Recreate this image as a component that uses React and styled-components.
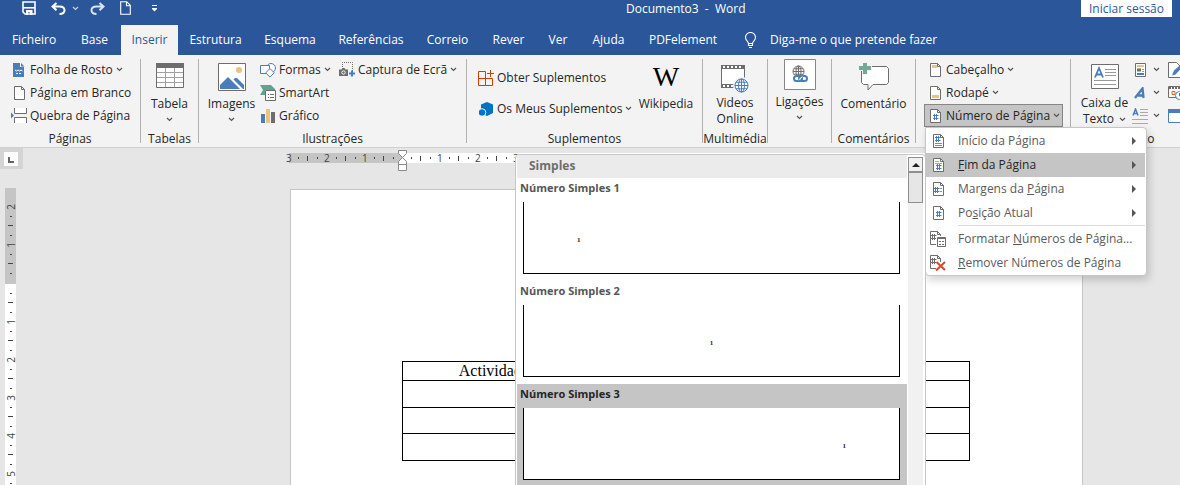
import React from "react";
import styled, { createGlobalStyle, css } from "styled-components";

const color = {
  brand: "#2b579a",
  ribbon: "#f3f3f3",
  line: "#c6c6c6",
  selected: "#c5c5c5",
  text: "#262626",
  menuText: "#5a5a5a",
  grey: "#6d6d6d",
  blue: "#4a7ebb",
  sand: "#eac282",
  canvas: "#e6e6e6",
};

const GlobalStyle = createGlobalStyle`
  * { box-sizing: border-box; }
  body {
    margin: 0;
    font: 12px/16px "Open Sans", "Noto Sans", sans-serif;
    color: ${color.text};
  }
  button { font: inherit; color: inherit; background: none; border: 0; padding: 0; margin: 0; }
`;

const Shell = styled.div`
  height: 100vh;
  display: flex;
  flex-direction: column;
  overflow: hidden;
  background: ${color.canvas};
`;

/* ---------- title bar ---------- */

const TitleBar = styled.header`
  display: flex;
  align-items: flex-start;
  height: 25px;
  flex: none;
  background: ${color.brand};
  color: #fff;
`;

const QuickAccess = styled.div`
  display: flex;
  align-items: center;
  height: 16px;
  padding-left: 22px;
  width: 626px;
`;

const QuickButton = styled.button`
  display: flex;
  margin-right: ${(p) => p.$after}px;
`;

const Title = styled.h1`
  margin: 0;
  font-size: 12px;
  font-weight: 400;
  line-height: 18px;
  white-space: pre;
`;

const SignIn = styled.button`
  margin: 0 8px 0 auto;
  width: 91px;
  height: 17px;
  background: #fff;
  color: ${color.brand};
  line-height: 16px;
`;

/* ---------- tabs ---------- */

const TabBar = styled.nav`
  display: flex;
  height: 30px;
  flex: none;
  background: ${color.brand};
  color: #fff;
`;

const Tab = styled.button`
  width: ${(p) => p.$width}px;
  flex: none;
  line-height: 30px;
  text-align: center;
  white-space: nowrap;
  ${(p) =>
    p.$active &&
    css`
      background: ${color.ribbon};
      color: ${color.brand};
    `}
`;

const TellMe = styled.button`
  display: flex;
  align-items: center;
  gap: 14px;
  padding-left: 17px;
  white-space: nowrap;
`;

/* ---------- ribbon ---------- */

const Ribbon = styled.div`
  position: relative;
  z-index: 2;
  display: flex;
  height: 93px;
  flex: none;
  background: ${color.ribbon};
  border-bottom: 1px solid #d0d0d0;
`;

const Group = styled.section`
  flex: none;
  width: ${(p) => p.$width}px;
  padding-top: 3px;
  display: flex;
  flex-direction: column;
`;

const Divider = styled.div`
  flex: none;
  width: 1px;
  margin: 4px 0;
  background: #b1b1b1;
`;

const GroupBody = styled.div`
  display: flex;
  height: 69px;
  gap: ${(p) => p.$gap || 0}px;
  padding-left: ${(p) => p.$indent || 0}px;
`;

const GroupLabel = styled.div`
  margin-top: 4px;
  text-align: center;
  white-space: nowrap;
`;

const Stack = styled.div`
  display: flex;
  flex-direction: column;
  padding-top: ${(p) => p.$top || 0}px;
  width: ${(p) => (p.$width ? p.$width + "px" : "auto")};
`;

const SmallButton = styled.button`
  display: flex;
  align-items: center;
  height: ${(p) => p.$height || 23}px;
  gap: 3px;
  white-space: nowrap;
`;

const IconSlot = styled.span`
  display: flex;
  justify-content: center;
  width: 16px;
  flex: none;
`;

const HeaderButton = styled.button`
  display: flex;
  align-items: center;
  height: 23px;
  width: 139px;
  padding-left: ${(p) => (p.$pressed ? 2 : 3)}px;
  gap: 3px;
  white-space: nowrap;
  ${(p) =>
    p.$pressed &&
    css`
      background: ${color.selected};
      border: 1px solid #868686;
    `}
`;

const BigButton = styled.button`
  display: flex;
  flex-direction: column;
  align-items: center;
  width: ${(p) => p.$width}px;
  padding-top: ${(p) => (p.$tall ? 1 : 5)}px;
  white-space: nowrap;
`;

const BigIcon = styled.span`
  display: flex;
  align-items: flex-start;
  justify-content: center;
  height: ${(p) => (p.$tall ? 35 : 33)}px;
`;

const BigCaret = styled.span`
  display: flex;
  align-items: center;
  justify-content: center;
  height: 14px;
`;

const WikiMark = styled.span`
  font: 28px/28px "Liberation Serif", serif;
  color: #000;
`;

const Inline = styled.span`
  display: flex;
  align-items: center;
  gap: 5px;
`;

const IconGrid = styled.div`
  display: grid;
  grid-template-columns: 18px 14px 24px;
  grid-auto-rows: 23px;
  align-items: center;
  justify-items: center;
`;

/* ---------- drop-down menu and gallery ---------- */

const Anchor = styled.div`
  position: relative;
`;

const Menu = styled.div`
  position: absolute;
  top: 100%;
  left: 1px;
  width: 222px;
  padding: 1px 1px 0 0;
  background: #fff;
  border: 1px solid ${color.line};
  border-radius: 0 4px 4px 4px;
  box-shadow: 2px 4px 8px rgba(0, 0, 0, 0.18);
  color: ${color.menuText};
`;

const MenuItem = styled.button`
  display: flex;
  align-items: center;
  width: 100%;
  height: 24px;
  padding: 0 9px 0 4px;
  text-align: left;
  white-space: nowrap;
  ${(p) =>
    p.$active &&
    css`
      background: ${color.selected};
      color: ${color.text};
    `}
`;

const MenuIcon = styled.span`
  display: flex;
  justify-content: center;
  width: 16px;
  margin-right: 12px;
`;

const MenuText = styled.span`
  flex: 1;
`;

const MenuRule = styled.div`
  height: 1px;
  margin: 0 0 1px 32px;
  background: #dcdcdc;
`;

const Gallery = styled.div`
  position: absolute;
  top: 26px;
  right: 100%;
  width: 411px;
  display: flex;
  padding: 0 1px;
  background: #fff;
  border: 1px solid ${color.line};
  border-radius: 4px 4px 0 0;
`;

const GalleryList = styled.div`
  flex: 1;
  font-weight: 700;
`;

const GalleryHeading = styled.div`
  height: 23px;
  padding-left: 12px;
  line-height: 22px;
  background: #ebebeb;
  color: #6e6e6e;
`;

const GalleryItem = styled.button`
  display: block;
  width: 100%;
  padding: 0 7px 7px 6px;
  text-align: left;
  font-size: 11px;
  font-weight: 700;
  background: ${(p) => (p.$active ? color.selected : "#fff")};
  color: ${(p) => (p.$active ? color.text : "#555")};
`;

const GalleryName = styled.div`
  height: 24px;
  line-height: 20px;
  margin-left: -3px;
`;

const Preview = styled.div`
  height: 72px;
  padding: 34px 53px 0;
  background: #fff;
  border: 1px solid #000;
  border-top: 0;
  font: 700 7px/8px "Liberation Serif", serif;
  color: #222;
  text-align: ${(p) => p.$align};
`;

const ScrollTrack = styled.div`
  width: 15px;
  margin: 2px 1px 0;
  background: #f1f1f1;
`;

const ScrollUp = styled.button`
  display: flex;
  align-items: center;
  justify-content: center;
  width: 100%;
  height: 15px;
  border: 1px solid #8f8f8f;
  background: #f1f1f1;
`;

const ScrollThumb = styled.div`
  height: 31px;
  border: 1px solid #8f8f8f;
  background: #e6e6e6;
`;

/* ---------- document area ---------- */

const Workspace = styled.main`
  display: flex;
  flex: 1;
  min-height: 0;
`;

const Side = styled.div`
  flex: none;
  width: 23px;
  display: flex;
  flex-direction: column;
`;

const TabSelector = styled.button`
  flex: none;
  display: flex;
  align-items: center;
  justify-content: center;
  height: 21px;
  padding-right: 1px;
  background: #d4d4d4;
`;

const VerticalRuler = styled.div`
  flex: 1;
  width: 11px;
  margin: 19px 0 0 5px;
`;

const HorizontalRuler = styled.div`
  position: relative;
  display: flex;
  height: 10px;
  margin: 5px 0 26px 266px;
`;

const RulerPart = styled.div`
  flex: none;
  display: flex;
  flex-direction: ${(p) => (p.$vertical ? "column" : "row")};
  ${(p) => (p.$vertical ? "height" : "width")}: ${(p) => p.$length}px;
  ${(p) => (p.$vertical ? "padding-top" : "padding-left")}: ${(p) => p.$start || 0}px;
  background: ${(p) => (p.$page ? "#fff" : color.selected)};
`;

const Marks = styled.div`
  display: flex;
  flex-direction: ${(p) => (p.$vertical ? "column" : "row")};
  ${(p) => (p.$vertical ? "margin-top" : "margin-left")}: -5px;
`;

const Centimetre = styled.div`
  flex: none;
  display: grid;
  ${(p) =>
    p.$vertical
      ? css`
          height: 38px;
          width: 11px;
          grid-template-rows: repeat(4, minmax(0, 1fr));
        `
      : css`
          width: 38px;
          height: 10px;
          grid-template-columns: repeat(4, minmax(0, 1fr));
        `}
  align-items: center;
  justify-items: center;
  color: #444;
  font-size: 10px;
  line-height: 10px;
`;

const Digit = styled.span`
  min-height: 1px;
  ${(p) => p.$vertical && "transform: rotate(-90deg);"}
`;

const Tick = styled.i`
  background: #444;
  width: ${(p) => (p.$vertical ? (p.$long ? 5 : 2) : 1)}px;
  height: ${(p) => (p.$vertical ? 1 : p.$long ? 5 : 2)}px;
`;

const IndentMarker = styled.svg`
  position: absolute;
  left: 109px;
  top: -3px;
`;

const Canvas = styled.div`
  flex: 1;
  min-width: 0;
`;

const Sheet = styled.article`
  width: 793px;
  min-height: 100%;
  margin-left: 267px;
  padding: 171px 112px 0 111px;
  background: #fff;
  border: 1px solid ${color.line};
`;

const Grid = styled.table`
  width: 568px;
  table-layout: fixed;
  border-collapse: collapse;
  font: 16px/18px "Liberation Serif", serif;
  color: #000;
`;

const Cell = styled.td`
  height: ${(p) => p.$height}px;
  padding: 0;
  border: 1px solid #000;
  text-align: center;
`;

/* ---------- icons ---------- */

const Svg = ({ w, h, children, ...rest }) => (
  <svg width={w} height={h} viewBox={`0 0 ${w} ${h}`} fill="none" aria-hidden="true" {...rest}>
    {children}
  </svg>
);

const Chevron = ({ stroke = "#555" }) => (
  <Svg w={7} h={5}>
    <path d="M1 1l2.5 2.5L6 1" stroke={stroke} strokeWidth="1.2" />
  </Svg>
);

const PageShape = ({ stroke = color.grey }) => (
  <>
    <path d="M.5.5h7l3 3v10H.5z" fill="#fff" stroke={stroke} />
    <path d="M7.5.5v3h3" stroke={stroke} />
  </>
);

const Hash = ({ x = 3, y = 5, c = color.blue }) => (
  <path
    d={`M${x + 1.5} ${y}v6M${x + 3.5} ${y}v6M${x} ${y + 1.5}h5.5M${x} ${y + 4.5}h5.5`}
    stroke={c}
    strokeWidth="1"
  />
);

const SaveIcon = () => (
  <Svg w={14} h={14}>
    <path d="M1 1h12v12H3l-2-2z" stroke="#fff" strokeWidth="1.6" />
    <path d="M1 6.8h12" stroke="#fff" strokeWidth="1.6" />
    <path d="M4 9h6.5v5H8v-2.500H6V14H4z" fill="#fff" />
  </Svg>
);
const UndoIcon = ({ flip }) => (
  <Svg w={15} h={13} style={flip ? { transform: "scaleX(-1)" } : undefined}>
    <path d="M5.500 1L1.500 4.500l4 3.800M2 4.500h6.500c3 0 5 1.500 5 3.800S11.500 12 8.500 12" stroke={flip ? "#dce4f0" : "#fff"} strokeWidth="2" />
  </Svg>
);
const NewPageIcon = () => (
  <Svg w={11} h={14}>
    <path d="M.7.7h6l3.600 3.600v9H.7z M6.500.7v4h4" stroke="#fff" strokeWidth="1.100" />
  </Svg>
);
const CustomizeIcon = () => (
  <Svg w={7} h={7}>
    <path d="M1 .5h5M1 3.500h5" stroke="#fff" />
    <path d="M1 4h5L3.500 6.500z" fill="#fff" />
  </Svg>
);
const BulbIcon = () => (
  <Svg w={11} h={16}>
    <path d="M3.500 11.500c0-2-3-3-3-6a5 5 0 0 1 10 0c0 3-3 4-3 6zM3.500 11.500v2h4v-2M4 15.500h3" stroke="#fff" strokeWidth="1.100" />
  </Svg>
);

const CoverIcon = () => (
  <Svg w={12} h={14}>
    <path d="M0 0h7v4h4v10H0z" fill={color.blue} />
    <path d="M8 0l3.500 3.500H8z" fill={color.blue} />
    <path d="M2 7l1.500 1L5 7l1.500 1L8 7l1.500 1" stroke="#fff" />
    <path d="M3 10.500h5.500" stroke="#fff" strokeDasharray="2 1" />
  </Svg>
);
const BlankIcon = () => (
  <Svg w={11} h={14}>
    <PageShape />
  </Svg>
);
const BreakIcon = () => (
  <Svg w={16} h={15}>
    <path d="M3.500 0v5.500h12V0M3.500 15V9.500h12V15" fill="#fff" stroke={color.grey} />
    <path d="M0 4.500l3 3-3 3z" fill={color.blue} />
  </Svg>
);
const TableIcon = () => (
  <Svg w={28} h={25}>
    <path d="M.5.5h27v24H.5z" fill="#fff" stroke={color.grey} />
    <path d="M0 0h28v5H0z" fill={color.grey} />
    <path d="M1 9.500h26M1 14.500h26M1 19.500h26M9.500 5v19M18.500 5v19" stroke="#a0a0a0" />
  </Svg>
);
const PictureIcon = () => (
  <Svg w={28} h={28}>
    <path d="M.5.5h27v27H.5z" fill="#fff" stroke={color.grey} />
    <circle cx="21" cy="7" r="3" fill={color.sand} />
    <path d="M2 26v-4l8-8 12 12z" fill={color.blue} />
    <path d="M17 15h2l7 7v4h-1L15.500 16.500z" fill={color.blue} />
  </Svg>
);
const ShapesIcon = () => (
  <Svg w={16} h={16}>
    <circle cx="11" cy="6" r="4.500" fill="#fff" stroke={color.blue} />
    <path d="M.5 3.500h9v8h-9z" fill="#fff" stroke={color.blue} />
    <path d="M10 6.500l4.300 4.300L10 15.100l-4.300-4.300z" fill="#fff" stroke={color.blue} />
  </Svg>
);
const SmartArtIcon = () => (
  <Svg w={16} h={16}>
    <path d="M0 0h11l4 4v1H5v5H0l3-5z" fill="#5fa391" />
    <path d="M5.500 5.500h10v10h-10z" fill="#fff" stroke={color.grey} />
    <path d="M8 9.500h1M10 9.500h4M8 12.500h1M10 12.500h4" stroke={color.grey} />
  </Svg>
);
const ChartIcon = () => (
  <Svg w={14} h={14}>
    <path d="M0 5h4v9H0z" fill={color.blue} />
    <path d="M5 0h4v14H5z" fill={color.sand} />
    <path d="M10 3h4v11h-4z" fill={color.grey} />
  </Svg>
);
const ScreenshotIcon = () => (
  <Svg w={16} h={15}>
    <path d="M3.500 5V.5h10V9" stroke={color.grey} strokeDasharray="1 1" />
    <path d="M0 7.500h2.500l1-1.500h2l1 1.500H9V14H0z" fill={color.grey} />
    <circle cx="4.500" cy="10.500" r="1.700" stroke="#fff" />
    <path d="M13 8.500v6M10 11.500h6" stroke={color.blue} strokeWidth="2" />
  </Svg>
);
const StoreIcon = () => (
  <Svg w={16} h={16}>
    <path d="M7.500 1.500h-7v14h14v-7H.5M7.500 1.500v14" stroke="#d83b01" />
    <path d="M12.500 0v7M9 3.500h7" stroke="#d83b01" />
  </Svg>
);
const AddinsIcon = () => (
  <Svg w={14} h={14}>
    <path d="M8 0l6 2.500v8.500l-6 3L2 11V2.500z" fill="#0072c6" />
    <circle cx="3" cy="10.500" r="3.800" fill="#0072c6" stroke={color.ribbon} />
  </Svg>
);
const GlobeShape = ({ cx, cy, r, stroke }) => (
  <g stroke={stroke}>
    <circle cx={cx} cy={cy} r={r} fill="#fff" />
    <ellipse cx={cx} cy={cy} rx={r / 2.2} ry={r} />
    <path d={`M${cx - r} ${cy}h${2 * r}M${cx - r + 1} ${cy - r / 2}h${2 * r - 2}M${cx - r + 1} ${cy + r / 2}h${2 * r - 2}M${cx} ${cy - r}v${2 * r}`} />
  </g>
);
const VideoIcon = () => (
  <Svg w={28} h={30}>
    <g transform="translate(0 2)">
      <path d="M.5.5h23v22H.5z" fill="#fff" stroke={color.grey} />
      <path d="M0 2h24M0 21h24" stroke={color.grey} strokeWidth="4" />
      <path d="M2 2h20M2 21h20" stroke="#fff" strokeWidth="2" strokeDasharray="2 2" />
      <circle cx="20.500" cy="20.500" r="8.500" fill={color.ribbon} />
      <GlobeShape cx={20.5} cy={20.5} r={6.5} stroke={color.blue} />
    </g>
  </Svg>
);
const LinksIcon = () => (
  <Svg w={32} h={31}>
    <path d="M.5.5h31v30H.5z" fill="#fff" stroke="#868686" />
    <GlobeShape cx={14.5} cy={12.5} r={5.5} stroke={color.grey} />
    <path d="M8 16h16v8H8z" fill="#fff" />
    <rect x="10" y="17" width="8" height="5" rx="2.500" stroke={color.blue} strokeWidth="2" />
    <rect x="15" y="17" width="8" height="5" rx="2.500" stroke={color.blue} strokeWidth="2" />
    <path d="M14.500 21l4-3.500" stroke="#fff" />
  </Svg>
);
const CommentIcon = () => (
  <Svg w={30} h={29}>
    <path d="M4.500 3.500h23l2 2v14l-2 2H14l-5 5.500v-5.500H4.500l-2-2v-14z" fill="#fff" stroke={color.grey} />
    <path d="M6 0v12M0 5h13" stroke={color.ribbon} strokeWidth="6" />
    <path d="M6 0v11M0 5h12" stroke="#74a997" strokeWidth="4" />
  </Svg>
);
const HeaderIcon = () => (
  <Svg w={11} h={14}>
    <PageShape />
    <path d="M2 2h5v3H2z" fill={color.sand} />
  </Svg>
);
const FooterIcon = () => (
  <Svg w={11} h={14}>
    <PageShape />
    <path d="M2 9h7v3H2z" fill={color.sand} />
  </Svg>
);
const NumberIcon = () => (
  <Svg w={11} h={14}>
    <PageShape />
    <Hash />
  </Svg>
);
const NumberTopIcon = () => (
  <Svg w={11} h={14}>
    <PageShape />
    <Hash x={2} y={2} />
    <path d="M2 9.500h7M2 11.500h7" stroke="#888" />
  </Svg>
);
const NumberBottomIcon = () => (
  <Svg w={11} h={14}>
    <PageShape />
    <path d="M2 3.500h4M2 5.500h7" stroke="#aaa" />
    <Hash x={3} y={6} />
  </Svg>
);
const NumberMarginIcon = () => (
  <Svg w={11} h={14}>
    <PageShape />
    <Hash x={1} y={5} />
    <path d="M7 6.500h2M7 9.500h2" stroke="#999" />
  </Svg>
);
const FormatNumberIcon = () => (
  <Svg w={16} h={16}>
    <PageShape />
    <Hash x={1} y={3} c={color.grey} />
    <path d="M6 5h10v11H6z" fill="#fff" />
    <path d="M7.500 6.500h8v9h-8zM7.500 7.500h8" stroke={color.grey} />
    <path d="M9 10.500h2M12 10.500h2M9 13.500h2M12 13.500h2" stroke={color.grey} />
  </Svg>
);
const RemoveNumberIcon = () => (
  <Svg w={16} h={16}>
    <PageShape />
    <Hash x={1} y={3} c={color.grey} />
    <path d="M6 7h10v9H6z" fill="#fff" />
    <path d="M6.500 7l8.500 8M15 7l-9 8.500" stroke="#d6492a" strokeWidth="2" />
  </Svg>
);
const TextBoxIcon = () => (
  <Svg w={28} h={26}>
    <g transform="translate(0 1)">
      <path d="M.5.5h27v24H.5z" fill="#fff" stroke={color.grey} />
      <path d="M4 13.500L8 4l4 9.500M5.500 10.500h5" stroke={color.blue} strokeWidth="1.800" />
      <path d="M14 5.500h11M14 8.500h11M14 11.500h11M3 16.500h22M3 20.500h22" stroke="#999" />
    </g>
  </Svg>
);
const QuickPartsIcon = () => (
  <Svg w={11} h={14}>
    <path d="M.5.5h10v13H.5z" fill="#fff" stroke={color.grey} />
    <path d="M2 2h7v2H2z" fill={color.sand} />
    <path d="M2 5.500h4v3H2z" fill={color.grey} />
    <path d="M7 6.500h2M7 8.500h2" stroke="#999" />
    <path d="M2 10h7v2H2z" fill={color.blue} />
  </Svg>
);
const WordArtIcon = () => (
  <Svg w={12} h={12}>
    <path d="M1 11L8.500 1.500 9.500 11M4 8.500h6" stroke={color.blue} strokeWidth="2.400" />
  </Svg>
);
const DropCapIcon = () => (
  <Svg w={16} h={16}>
    <path d="M1 7.500L3.500 1 6 7.500M2 5.500h3.500" stroke={color.blue} strokeWidth="1.500" />
    <path d="M8 1.500h8M8 4.500h8M8 7.500h8M0 11.500h16M0 15.500h16" stroke="#aaa" />
  </Svg>
);
const SignatureIcon = () => (
  <Svg w={14} h={16}>
    <path d="M.5.5h8l4 4v11H.5z" fill="#fff" stroke={color.grey} />
    <path d="M4 13.500l2-5 7-6 1 3-6.500 7z" fill={color.blue} />
  </Svg>
);
const DateIcon = () => (
  <Svg w={14} h={15}>
    <path d="M.5 1.500h13v11H.5z" fill="#fff" stroke={color.grey} />
    <path d="M1 3h12" stroke={color.grey} strokeWidth="2" strokeDasharray="2 1" />
    <path d="M4 6.500h3v3H4z" stroke="#d8692a" />
    <circle cx="11.500" cy="10.500" r="4" fill="#fff" stroke={color.blue} />
    <path d="M11.500 8v3H14" stroke={color.blue} />
  </Svg>
);
const ObjectIcon = () => (
  <Svg w={14} h={14}>
    <path d="M.5.5h16v13H.5z" fill="#fff" stroke={color.blue} />
    <path d="M0 0h14v4H0z" fill={color.blue} />
  </Svg>
);

/* ---------- composed pieces ---------- */

const Command = ({ icon, children, caret, height }) => (
  <SmallButton $height={height}>
    <IconSlot>{icon}</IconSlot>
    <span>{children}</span>
    {caret && <Chevron />}
  </SmallButton>
);

const BigCommand = ({ icon, children, caret, width, tall }) => (
  <BigButton $width={width} $tall={tall}>
    <BigIcon $tall={tall}>{icon}</BigIcon>
    {children}
    {caret && (
      <BigCaret>
        <Chevron />
      </BigCaret>
    )}
  </BigButton>
);

const RibbonGroup = ({ width, indent, gap, label, children }) => (
  <>
    <Group $width={width}>
      <GroupBody $indent={indent} $gap={gap}>{children}</GroupBody>
      {label && <GroupLabel>{label}</GroupLabel>}
    </Group>
    <Divider />
  </>
);

const Scale = ({ marks, vertical }) => (
  <Marks $vertical={vertical}>
    {marks.map((mark, i) => (
      <Centimetre key={i} $vertical={vertical}>
        <Digit $vertical={vertical}>{mark}</Digit>
        <Tick $vertical={vertical} />
        <Tick $vertical={vertical} $long />
        <Tick $vertical={vertical} />
      </Centimetre>
    ))}
  </Marks>
);

const tabs = [
  ["Ficheiro", 68],
  ["Base", 53],
  ["Inserir", 57],
  ["Estrutura", 75],
  ["Esquema", 74],
  ["Referências", 88],
  ["Correio", 65],
  ["Rever", 57],
  ["Ver", 42],
  ["Ajuda", 59],
  ["PDFelement", 90],
];

const menuItems = [
  { icon: <NumberTopIcon />, text: <>Início da Pá<u>g</u>ina</>, more: true },
  { icon: <NumberBottomIcon />, text: <><u>F</u>im da Página</>, more: true, active: true },
  { icon: <NumberMarginIcon />, text: <>Margens da <u>P</u>ágina</>, more: true },
  { icon: <NumberIcon />, text: <>Po<u>s</u>ição Atual</>, more: true },
  { rule: true, icon: <FormatNumberIcon />, text: <>Formatar <u>N</u>úmeros de Página...</> },
  { icon: <RemoveNumberIcon />, text: <><u>R</u>emover Números de Página</> },
];

const galleryItems = [
  ["Número Simples 1", "left"],
  ["Número Simples 2", "center"],
  ["Número Simples 3", "right"],
];

const PageNumberMenu = () => (
  <Menu>
    {menuItems.map((item, i) => (
      <React.Fragment key={i}>
        {item.rule && <MenuRule />}
        <MenuItem $active={item.active}>
          <MenuIcon>{item.icon}</MenuIcon>
          <MenuText>{item.text}</MenuText>
          {item.more && (
            <Svg w={4} h={8}>
              <path d="M0 0l4 4-4 4z" fill="#555" />
            </Svg>
          )}
        </MenuItem>
      </React.Fragment>
    ))}
    <Gallery>
      <GalleryList>
        <GalleryHeading>Simples</GalleryHeading>
        {galleryItems.map(([name, align], i) => (
          <GalleryItem key={name} $active={i === 2}>
            <GalleryName>{name}</GalleryName>
            <Preview $align={align}>1</Preview>
          </GalleryItem>
        ))}
      </GalleryList>
      <ScrollTrack>
        <ScrollUp aria-label="Deslocar para cima">
          <Svg w={8} h={4}>
            <path d="M0 4l4-4 4 4z" fill="#222" />
          </Svg>
        </ScrollUp>
        <ScrollThumb />
      </ScrollTrack>
    </Gallery>
  </Menu>
);

export default function App() {
  return (
    <Shell>
      <GlobalStyle />
      <TitleBar>
        <QuickAccess>
          <QuickButton $after={15} aria-label="Guardar"><SaveIcon /></QuickButton>
          <QuickButton $after={6} aria-label="Anular"><UndoIcon /></QuickButton>
          <QuickButton $after={11} aria-label="Opções de anular"><Chevron stroke="#c5d1e6" /></QuickButton>
          <QuickButton $after={15} aria-label="Refazer"><UndoIcon flip /></QuickButton>
          <QuickButton $after={20} aria-label="Novo"><NewPageIcon /></QuickButton>
          <QuickButton $after={0} aria-label="Personalizar"><CustomizeIcon /></QuickButton>
        </QuickAccess>
        <Title>{"Documento3  -  Word"}</Title>
        <SignIn>Iniciar sessão</SignIn>
      </TitleBar>

      <TabBar>
        {tabs.map(([name, width]) => (
          <Tab key={name} $width={width} $active={name === "Inserir"}>
            {name}
          </Tab>
        ))}
        <TellMe>
          <BulbIcon />
          Diga-me o que pretende fazer
        </TellMe>
      </TabBar>

      <Ribbon>
        <RibbonGroup width={140} indent={11} label="Páginas">
          <Stack>
            <Command icon={<CoverIcon />} caret>Folha de Rosto</Command>
            <Command icon={<BlankIcon />}>Página em Branco</Command>
            <Command icon={<BreakIcon />}>Quebra de Página</Command>
          </Stack>
        </RibbonGroup>

        <RibbonGroup width={57} label="Tabelas">
          <BigCommand width={57} icon={<TableIcon />} caret>Tabela</BigCommand>
        </RibbonGroup>

        <RibbonGroup width={267} indent={7} gap={3} label="Ilustrações">
          <BigCommand width={51} icon={<PictureIcon />} caret>Imagens</BigCommand>
          <Stack $width={76}>
            <Command icon={<ShapesIcon />} caret>Formas</Command>
            <Command icon={<SmartArtIcon />}>SmartArt</Command>
            <Command icon={<ChartIcon />}>Gráfico</Command>
          </Stack>
          <Stack>
            <Command icon={<ScreenshotIcon />} caret>Captura de Ecrã</Command>
          </Stack>
        </RibbonGroup>

        <RibbonGroup width={235} indent={11} label="Suplementos">
          <Stack $top={4} $width={160}>
            <Command icon={<StoreIcon />} height={31}>Obter Suplementos</Command>
            <Command icon={<AddinsIcon />} height={31} caret>Os Meus Suplementos</Command>
          </Stack>
          <BigCommand width={56} icon={<WikiMark>W</WikiMark>}>Wikipedia</BigCommand>
        </RibbonGroup>

        <RibbonGroup width={64} label="Multimédia">
          <BigCommand width={64} icon={<VideoIcon />}>
            <span>Videos</span>
            <span>Online</span>
          </BigCommand>
        </RibbonGroup>

        <RibbonGroup width={63}>
          <BigCommand width={63} icon={<LinksIcon />} caret tall>Ligações</BigCommand>
        </RibbonGroup>

        <RibbonGroup width={83} label="Comentários">
          <BigCommand width={83} icon={<CommentIcon />}>Comentário</BigCommand>
        </RibbonGroup>

        <RibbonGroup width={154} indent={8}>
          <Stack>
            <HeaderButton>
              <IconSlot><HeaderIcon /></IconSlot>Cabeçalho<Chevron />
            </HeaderButton>
            <HeaderButton>
              <IconSlot><FooterIcon /></IconSlot>Rodapé<Chevron />
            </HeaderButton>
            <Anchor>
              <HeaderButton $pressed>
                <IconSlot><NumberIcon /></IconSlot>Número de Página<Chevron />
              </HeaderButton>
              <PageNumberMenu />
            </Anchor>
          </Stack>
        </RibbonGroup>

        <RibbonGroup width={136} indent={7} label="Texto">
          <BigCommand width={53} icon={<TextBoxIcon />}>
            <span>Caixa de</span>
            <Inline>Texto <Chevron /></Inline>
          </BigCommand>
          <IconGrid>
            <QuickPartsIcon /><Chevron /><SignatureIcon />
            <WordArtIcon /><Chevron /><DateIcon />
            <DropCapIcon /><Chevron /><ObjectIcon />
          </IconGrid>
        </RibbonGroup>
      </Ribbon>

      <Workspace>
        <Side>
          <TabSelector aria-label="Tabulação">
            <Svg w={14} h={14}>
              <path d="M0 0h14v14H0z" fill="#fcfcfc" />
              <path d="M5 5v5h5" stroke="#666" strokeWidth="2" />
            </Svg>
          </TabSelector>
          <VerticalRuler>
            <RulerPart $vertical $length={96} $start={19}>
              <Scale vertical marks={["2", "1"]} />
            </RulerPart>
            <RulerPart $vertical $page $length={220}>
              <Scale vertical marks={["", "1", "2", "3", "4", "5"]} />
            </RulerPart>
          </VerticalRuler>
        </Side>
        <Canvas>
          <HorizontalRuler>
            <RulerPart $length={113}>
              <Scale marks={["3", "2", "1"]} />
            </RulerPart>
            <RulerPart $page $length={568}>
              <Scale marks={["", "1", "2", "3", "4"]} />
            </RulerPart>
            <IndentMarker width="9" height="22" viewBox="0 0 9 22" fill="#fff" stroke="#8a8a8a" aria-hidden="true">
              <path d="M.5.5h8v3l-4 4-4-4zM4.500 7.500l4 4v3h-8v-3zM.5 14.500h8v6h-8z" />
            </IndentMarker>
          </HorizontalRuler>
          <Sheet>
            <Grid>
              <tbody>
                <tr>
                  <Cell $height={19}>Actividades</Cell>
                  <Cell $height={19} />
                  <Cell $height={19} />
                </tr>
                {[27, 26, 27].map((height, i) => (
                  <tr key={i}>
                    <Cell $height={height} />
                    <Cell $height={height} />
                    <Cell $height={height} />
                  </tr>
                ))}
              </tbody>
            </Grid>
          </Sheet>
        </Canvas>
      </Workspace>
    </Shell>
  );
}
